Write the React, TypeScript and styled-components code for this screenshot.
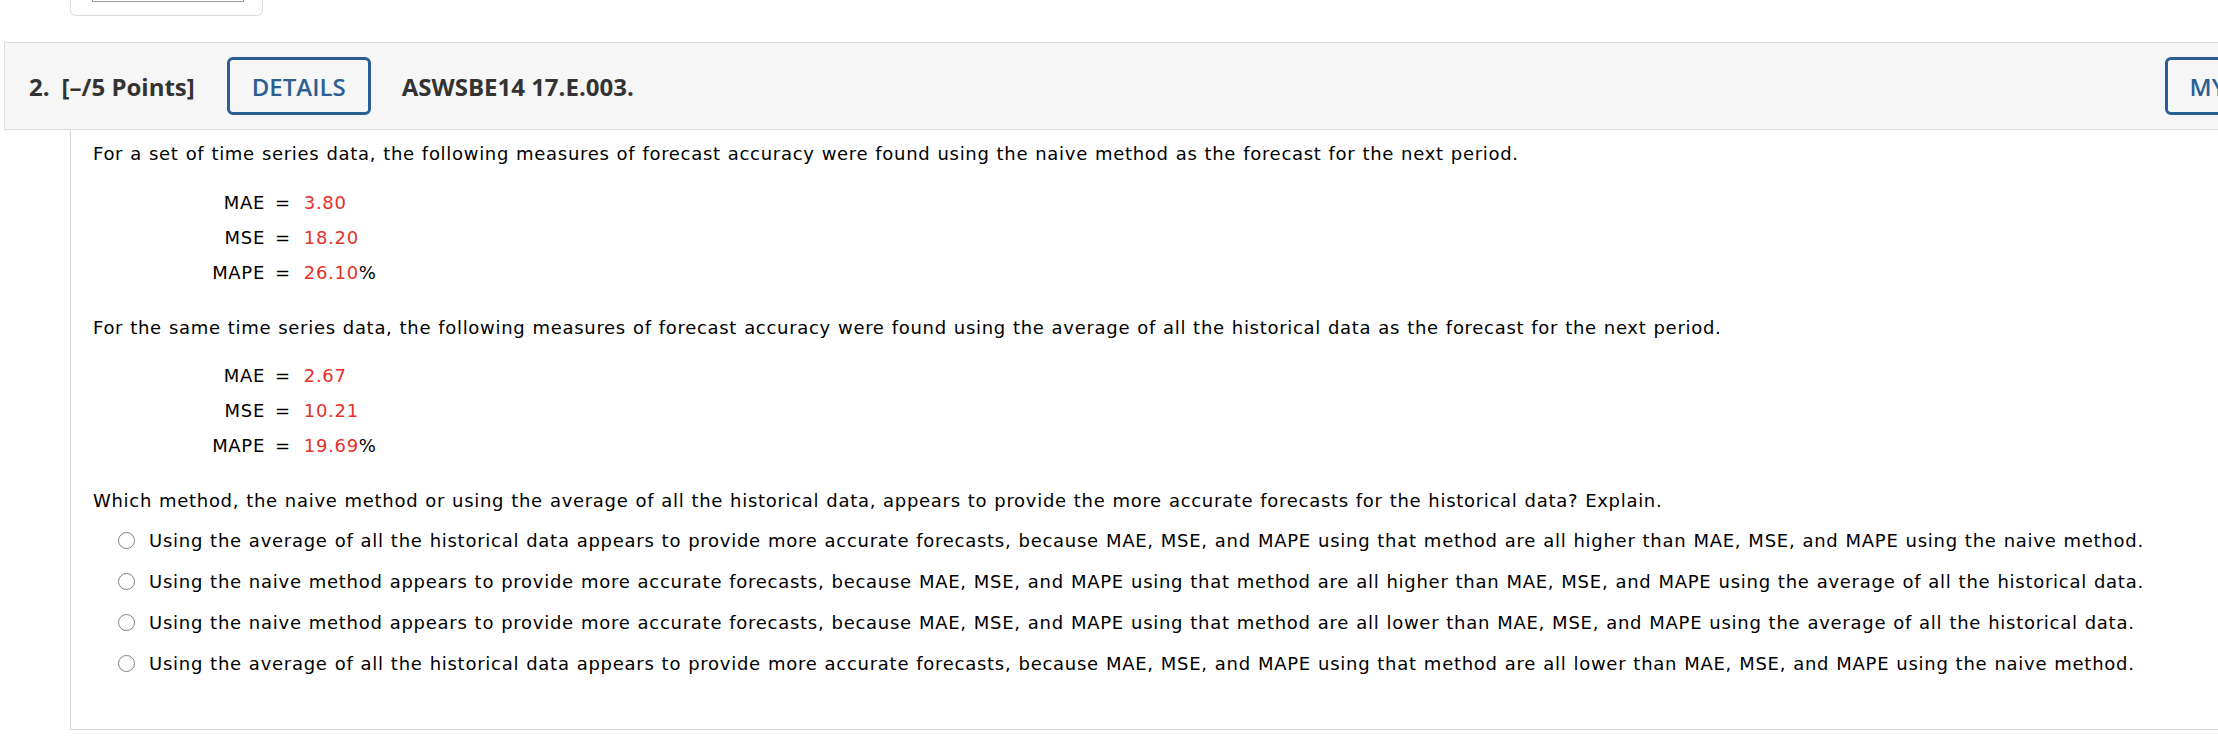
import React from "react";
import styled, { createGlobalStyle } from "styled-components";

const GlobalStyle = createGlobalStyle`
    html, body {
        margin: 0;
        padding: 0;
        background: #fff;
        overflow: hidden;
    }
`;

const Page = styled.div`
    width: 2218px;
    height: 756px;
    overflow: hidden;
    background: #fff;
`;

// bottom of the previous question's card, cut off at the top of the screen
const PrevCard = styled.div`
    margin-left: 70px;
    width: 193px;
    height: 16px;
    box-sizing: border-box;
    border: 1px solid #dcdcdc;
    border-top: none;
    border-radius: 0 0 6px 6px;
    padding: 0 21px;
`;

const PrevInput = styled.div`
    width: 150px;
    height: 1px;
    border: 1px solid #9a9a9a;
    border-top: none;
`;

const QuestionHeader = styled.div`
    margin: 26px 0 0 4px;
    width: 2355px;
    height: 88px;
    box-sizing: border-box;
    display: flex;
    align-items: center;
    padding: 0 24px;
    background: #f6f6f6;
    border: 1px solid #dddddd;
    border-right: none;
    font-family: "Open Sans", "Noto Sans", sans-serif;
    color: #333;
`;

const HeaderText = styled.span`
    font-size: 24px;
    font-weight: 700;
    white-space: nowrap;
    margin-left: ${(p) => p.gap || 0}px;
`;

const HeaderButton = styled.button`
    height: 58px;
    box-sizing: border-box;
    padding: 0 22px;
    border: 3px solid #2b5f94;
    border-radius: 6px;
    background: transparent;
    color: #2b5f94;
    font-family: "Open Sans", "Noto Sans", sans-serif;
    font-size: 24px;
    font-weight: 600;
    white-space: nowrap;
    margin-left: ${(p) => (p.push ? "auto" : `${p.gap || 0}px`)};
`;

const Content = styled.div`
    margin-left: 70px;
    height: 600px;
    box-sizing: border-box;
    padding: 11px 0 0 22px;
    border-left: 1px solid #d6d6d6;
    border-bottom: 1px solid #d6d6d6;
    font-family: "DejaVu Sans", Verdana, sans-serif;
    font-size: 18px;
    line-height: 26px;
    letter-spacing: 0.7px;
    word-spacing: 0.6px;
    color: #000;
`;

const Para = styled.p`
    margin: 0;
    white-space: nowrap;
`;

const Measures = styled.div`
    display: grid;
    grid-template-columns: 172px auto 1fr;
    grid-auto-rows: 35px;
    align-items: center;
    margin: 18px 0 24.5px;
`;

const Label = styled.span`
    text-align: right;
`;

const Eq = styled.span`
    margin: 0 13px 0 10px;
`;

const Value = styled.span`
    color: #e5302a;
`;

const Options = styled.div`
    margin-top: 6px;
    padding-left: 25px;
`;

const Option = styled.label`
    display: flex;
    align-items: center;
    height: 41px;
    white-space: nowrap;
    letter-spacing: 0.73px;
`;

const Radio = styled.span`
    width: 17px;
    height: 17px;
    box-sizing: border-box;
    flex: none;
    border: 1px solid #808080;
    border-radius: 50%;
    background: #fff;
    margin-right: 14px;
`;

const naive = [
    { label: "MAE", value: "3.80" },
    { label: "MSE", value: "18.20" },
    { label: "MAPE", value: "26.10", pct: true },
];

const average = [
    { label: "MAE", value: "2.67" },
    { label: "MSE", value: "10.21" },
    { label: "MAPE", value: "19.69", pct: true },
];

const choices = [
    "Using the average of all the historical data appears to provide more accurate forecasts, because MAE, MSE, and MAPE using that method are all higher than MAE, MSE, and MAPE using the naive method.",
    "Using the naive method appears to provide more accurate forecasts, because MAE, MSE, and MAPE using that method are all higher than MAE, MSE, and MAPE using the average of all the historical data.",
    "Using the naive method appears to provide more accurate forecasts, because MAE, MSE, and MAPE using that method are all lower than MAE, MSE, and MAPE using the average of all the historical data.",
    "Using the average of all the historical data appears to provide more accurate forecasts, because MAE, MSE, and MAPE using that method are all lower than MAE, MSE, and MAPE using the naive method.",
];

const MeasureTable = ({ rows }) => (
    <Measures>
        {rows.map((r) => (
            <React.Fragment key={r.label}>
                <Label>{r.label}</Label>
                <Eq>=</Eq>
                <span>
                    <Value>{r.value}</Value>
                    {r.pct && "%"}
                </span>
            </React.Fragment>
        ))}
    </Measures>
);

export default function App() {
    return (
        <Page>
            <GlobalStyle />
            <PrevCard>
                <PrevInput />
            </PrevCard>

            <QuestionHeader>
                <HeaderText>2.</HeaderText>
                <HeaderText gap={12}>[–/5 Points]</HeaderText>
                <HeaderButton gap={32}>DETAILS</HeaderButton>
                <HeaderText gap={31}>ASWSBE14 17.E.003.</HeaderText>
                <HeaderButton push>MY NOTES</HeaderButton>
            </QuestionHeader>

            <Content>
                <Para>
                    For a set of time series data, the following measures of forecast accuracy were found using the naive method as the forecast for the next period.
                </Para>
                <MeasureTable rows={naive} />
                <Para>
                    For the same time series data, the following measures of forecast accuracy were found using the average of all the historical data as the forecast for the next period.
                </Para>
                <MeasureTable rows={average} />
                <Para>
                    Which method, the naive method or using the average of all the historical data, appears to provide the more accurate forecasts for the historical data? Explain.
                </Para>
                <Options>
                    {choices.map((c) => (
                        <Option key={c}>
                            <Radio />
                            {c}
                        </Option>
                    ))}
                </Options>
            </Content>
        </Page>
    );
}
